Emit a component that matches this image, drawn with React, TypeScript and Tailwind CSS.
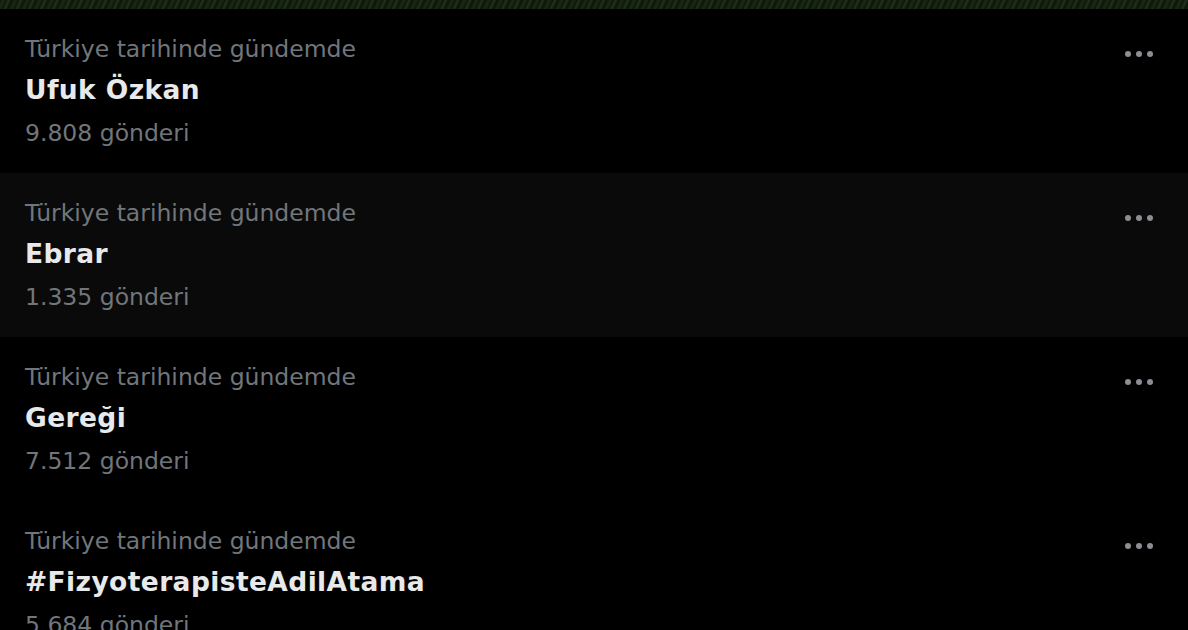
const trends = [
  { category: "Türkiye tarihinde gündemde", title: "Ufuk Özkan", count: "9.808 gönderi" },
  { category: "Türkiye tarihinde gündemde", title: "Ebrar", count: "1.335 gönderi", active: true },
  { category: "Türkiye tarihinde gündemde", title: "Gereği", count: "7.512 gönderi" },
  { category: "Türkiye tarihinde gündemde", title: "#FizyoterapisteAdilAtama", count: "5.684 gönderi" },
];

function MoreDots() {
  return (
    <div className="mt-[21px] flex h-[6px] items-center gap-[5px] self-start">
      <span className="h-[6px] w-[6px] rounded-full bg-[#8b8e92]" />
      <span className="h-[6px] w-[6px] rounded-full bg-[#8b8e92]" />
      <span className="h-[6px] w-[6px] rounded-full bg-[#8b8e92]" />
    </div>
  );
}

export default function App() {
  return (
    <div className="h-[630px] w-[1188px] overflow-hidden bg-black font-['DejaVu_Sans',sans-serif]">
      {/* cropped banner image above the list */}
      <div className="h-[9px] w-full bg-[repeating-linear-gradient(115deg,#0c1509_0px,#1b2a15_3px,#0e180b_6px,#22321a_8px,#0b1309_11px)]" />

      {trends.map((t) => (
        <div
          key={t.title}
          className={`flex h-[164px] justify-between pl-[25px] pr-[35px] pt-[21px] ${t.active ? "bg-[#0a0a0a]" : "bg-black"}`}
        >
          <div className="flex flex-col">
            <div className="h-[38px] text-[23.5px] leading-[38px] text-[#71767b]">{t.category}</div>
            <div className="h-[44px] text-[26.5px] font-bold leading-[44px] tracking-[0.4px] text-[#e7e9ea]">{t.title}</div>
            <div className="h-[42px] text-[23.5px] leading-[42px] text-[#71767b]">{t.count}</div>
          </div>
          <MoreDots />
        </div>
      ))}
    </div>
  );
}
